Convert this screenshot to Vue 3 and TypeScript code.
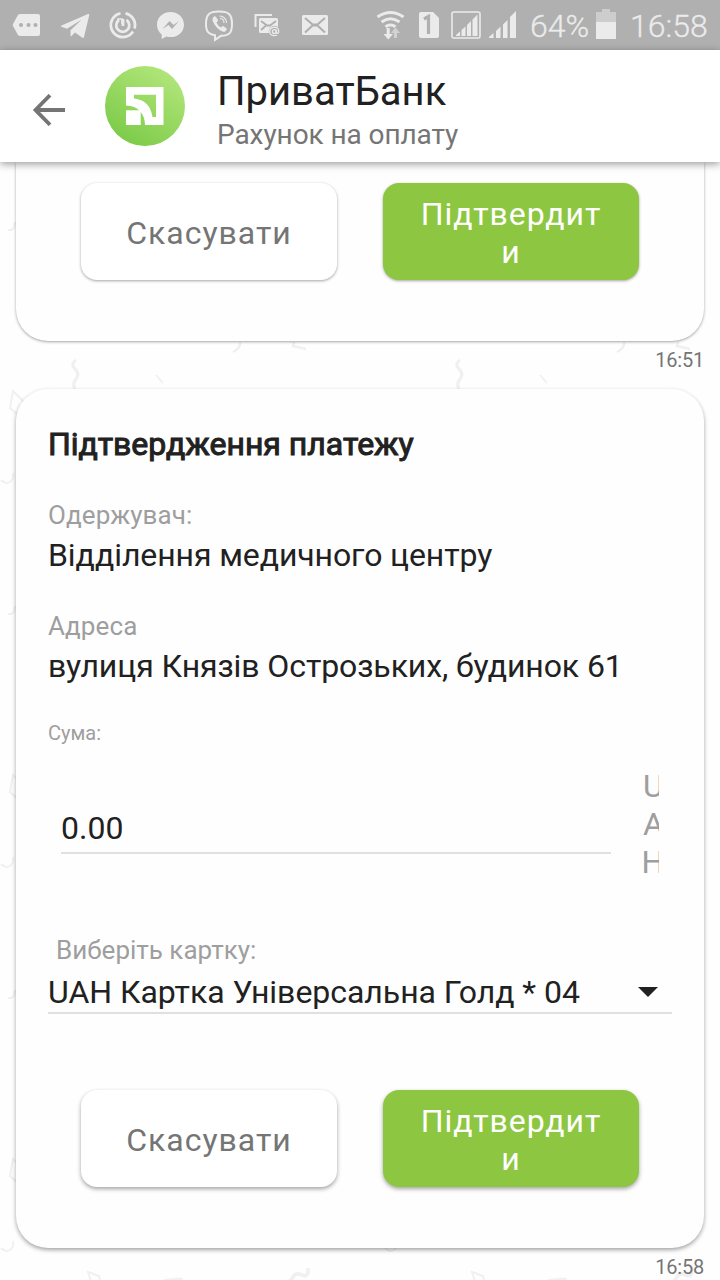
<script setup lang="ts">
interface Detail {
  label: string
  value: string
}

const contact = { name: 'ПриватБанк', subtitle: 'Рахунок на оплату' }
const actions = { cancel: 'Скасувати', confirm: 'Підтвердити' }
const details: Detail[] = [
  { label: 'Одержувач:', value: 'Відділення медичного центру' },
  { label: 'Адреса', value: 'вулиця Князів Острозьких, будинок 61' },
]
const currency = ['U', 'A', 'H']
</script>

<template>
  <div class="screen">
    <div class="status">
      <svg class="status-icons" width="340" height="50" viewBox="0 0 340 50">
        <g fill="#ebebeb">
          <path d="M20 14h18q2 0 2 2v18q0 2-2 2H20q-1 0-2-1l-5-9q-.5-1 0-2l5-9q1-1 2-1z" />
          <path d="M61.500 25.500 88 14q1.500-.4 1.200 1.200L84 37q-.6 1.700-2 .6l-7-5-3.700 3.700-.8-.6v-5.500l11-10.500-14.500 9-5.600-1.900q-1.200-.6.100-1.300z" />
          <path d="M170.500 12c-8 0-13.500 5.600-13.500 12.700 0 4 1.700 7.400 4.700 9.700V39l4.600-2.500c1.300.4 2.700.6 4.200.6 8 0 13.500-5.500 13.500-12.400S178.500 12 170.500 12z" />
          <path d="M254.500 14H272v2h-15.500v11h-2z" />
          <rect x="259" y="18" width="19" height="15" rx="1.500" />
          <rect x="302" y="15" width="26" height="20" rx="1.500" />
        </g>
        <g fill="#b0b0b0">
          <circle cx="21" cy="25" r="2" /><circle cx="28.500" cy="25" r="2" /><circle cx="35.500" cy="25" r="2" />
          <path d="m162.500 29 7-8 4 4 5.500-4-7 8-3.500-4z" />
          <circle cx="274.500" cy="31.500" r="5.800" />
        </g>
        <g fill="none" stroke="#ebebeb">
          <path d="M120.500 13.300a12 12 0 1 0 12.500 18.200M125.500 13.300a12 12 0 0 1 9 15.200" stroke-width="2.800" />
          <path d="M119 20a6.500 6.500 0 1 0 7.500 0M123 19v7" stroke-width="2.800" />
          <path d="M117 19h5v5" stroke-width="1.600" />
          <path d="M219 11.500c10 0 13 3 13 12.500s-3 11.500-11 11.800l-6 4v-4.600c-7-1-9-4-9-11.200 0-9.500 3-12.500 13-12.500z" stroke-width="2" />
          <path d="M219.500 16c4 0 7 3 7 7M220 18.500c2.500 0 4 1.800 4 4.500" stroke-width="1.100" />
        </g>
        <path d="M214 16.500q1-.8 2 .5l2 3q.4 1-1.600 2.500 1.600 3.500 4.600 5 1.500-1.800 2.500-1.300l3 2q1 1-1 3-1.200 1-3 .3-7-3-10-11-.4-2.500 1.500-4z" fill="#ebebeb" />
        <g fill="none" stroke="#b0b0b0" stroke-width="1.800">
          <path d="m261 21 6 4.500h3l6-4.500M261 30l5-4.500" />
          <path d="m305 18 7.500 6.500h5L325 18M305 32.500l7.500-7h5l7.500 7" stroke-width="2.200" />
        </g>
        <g fill="none" stroke="#ebebeb" stroke-width="1.300">
          <circle cx="274.300" cy="31.500" r="1.900" />
          <path d="M276.200 29.500v3q.3 1.200 1.500.8 1.300-.7 1-2.700-.7-3.400-4.500-3.400-4.500.4-4.500 4.600.4 3.900 4.600 3.900 1.500 0 2.600-.7" />
        </g>
      </svg>
      <div class="status-right">
        <svg width="150" height="50" viewBox="370 0 150 50">
          <g fill="none" stroke="#ebebeb" stroke-width="3">
            <path d="M377.500 17q13-9 26 0M381.500 22q9-6.500 18 0M385.500 26.700q5-3.500 10 0" />
          </g>
          <path d="M386.700 28h3v6h3.300l-4.800 5.500-4.700-5.500h3.200z" fill="#ebebeb" />
          <path d="M394 38v-5h-3l4.500-5.500L400 33h-3v5z" fill="#d2d2d2" />
          <path d="M421 12h12l6 6v18q0 2-2 2h-16q-2 0-2-2V14q0-2 2-2z" fill="#ebebeb" />
          <path d="m424 19 4.500-2.500v17.500" fill="none" stroke="#b0b0b0" stroke-width="3.200" />
          <rect x="452" y="12" width="28" height="26" rx="2" fill="none" stroke="#ebebeb" stroke-width="1.600" />
          <path d="M456 36v-1l4-3.500V36zm5.500 0v-6l4-3.500V36zm5.500 0V25l4-4v15zm5.500 0V19.500l5-5V36z" fill="#ebebeb" />
          <path d="M489 38v-1l4.500-4v5zm7 0v-7l4.500-4.500V38zm7 0V24.500l4.500-4.500v18zm7 0V17l6-6v27z" fill="#ebebeb" />
        </svg>
        <span class="battery-text">64%</span>
        <svg class="battery" width="20" height="50" viewBox="0 0 20 50">
          <path d="M0 12h6V9h8v3h6v10H0z" fill="#cdcdcd" /><path d="M0 22h20v17H0z" fill="#ebebeb" />
        </svg>
        <span class="clock">16:58</span>
      </div>
    </div>

    <header class="header">
      <svg class="back" width="34" height="32" viewBox="0 0 34 32">
        <path d="M33 16H4M18 1.200 3.500 16 18 30.800" fill="none" stroke="#757575" stroke-width="3.800" />
      </svg>
      <svg class="avatar" width="80" height="80" viewBox="0 0 80 80">
        <defs>
          <linearGradient id="avatarFill" x1=".8" y1=".1" x2=".25" y2=".95">
            <stop offset="0" stop-color="#b0e579" /><stop offset="1" stop-color="#7dcb49" />
          </linearGradient>
        </defs>
        <circle cx="40" cy="40" r="40" fill="url(#avatarFill)" />
        <path d="M21 21h37.500v38H40c0-11-7-19.500-19-19.500zM29 28.700v3.800C41 33.500 46 41 47.500 51h3.500V28.700z" fill="#fff" fill-rule="evenodd" />
        <path d="M21 44.300h14.700V59H21z" fill="#fff" />
      </svg>
      <div class="contact">
        <div class="name">{{ contact.name }}</div>
        <div class="subtitle">{{ contact.subtitle }}</div>
      </div>
    </header>

    <main class="chat">
      <svg class="confetti" width="720" height="1118" viewBox="0 162 720 1118">
        <defs>
          <pattern id="confettiTile" width="384" height="384" y="342" patternUnits="userSpaceOnUse">
            <g fill="none" stroke="#f0f0f0" stroke-width="2.500">
              <path d="M240 0q1 6-7 10M294 0l-1 4 13 3" />
              <path d="M76 18q-6 4-1 9t1 10-1 10" stroke-width="3.200" />
              <path d="m156 33 7 8" stroke-width="1.800" />
              <path d="m13 49 13 13-8 11-8-7z" stroke-width="2" />
              <path d="M1 138q6 6 11 0 2-3 1-7" stroke-width="1.800" />
              <path d="M8 272q7 1 7-8" stroke-width="2" />
              <path d="m88 162 11 4 3 12-9 0z" stroke-width="2" />
              <path d="M285 172q6 0 8-5t9-2 6-7" stroke-width="3.600" />
            </g>
            <path d="m164 169 18-1.500 6 14-22 2z" fill="#f0f0f0" />
          </pattern>
        </defs>
        <rect y="162" width="720" height="1118" fill="url(#confettiTile)" />
      </svg>

      <section class="card previous">
        <div class="actions">
          <button class="btn cancel">{{ actions.cancel }}</button>
          <button class="btn confirm">{{ actions.confirm }}</button>
        </div>
      </section>
      <time class="stamp">16:51</time>

      <section class="card current">
        <h1 class="title">Підтвердження платежу</h1>
        <div v-for="d in details" :key="d.label" class="detail">
          <div class="label">{{ d.label }}</div>
          <div class="value">{{ d.value }}</div>
        </div>
        <div class="sum-label">Сума:</div>
        <div class="sum">
          <div class="amount">0.00</div>
          <div class="currency"><span v-for="c in currency" :key="c">{{ c }}</span></div>
        </div>
        <div class="card-label">Виберіть картку:</div>
        <div class="select">
          <span class="picked">UAH Картка Універсальна Голд * 04</span>
          <svg width="20" height="10" viewBox="0 0 20 10"><path d="M0 0h20L10 10z" fill="#212121" /></svg>
        </div>
        <div class="actions">
          <button class="btn cancel">{{ actions.cancel }}</button>
          <button class="btn confirm">{{ actions.confirm }}</button>
        </div>
      </section>
      <time class="stamp last">16:58</time>
    </main>
  </div>
</template>

<style>
body {
  margin: 0;
  overflow: hidden;
}
</style>

<style scoped>
.screen {
  width: 720px;
  height: 1280px;
  overflow: hidden;
  display: flex;
  flex-direction: column;
  background: #fefefe;
  color: #212121;
  font-family: Roboto, 'Noto Sans', sans-serif;
}
.screen * {
  box-sizing: border-box;
}
svg {
  display: block;
  flex: none;
}
.status {
  height: 50px;
  flex: none;
  display: flex;
  justify-content: space-between;
  background: #b0b0b0;
  color: #ebebeb;
}
.status-right {
  width: 350px;
  display: flex;
  line-height: 52px;
  font-size: 32px;
  font-weight: 300;
  white-space: nowrap;
  -webkit-text-stroke: 0.3px #ebebeb;
}
.battery-text {
  width: 66px;
  padding-left: 10px;
  flex: none;
}
.battery {
  margin-left: 10px;
}
.clock {
  margin-left: 14px;
}
.header {
  position: relative;
  z-index: 1;
  height: 112px;
  flex: none;
  display: flex;
  background: #fff;
  box-shadow: 0 2px 8px rgba(0, 0, 0, 0.4);
}
.back {
  margin: 44px 0 0 32px;
}
.avatar {
  margin: 16px 0 0 39px;
}
.contact {
  margin: 18px 0 0 32px;
  white-space: nowrap;
}
.name {
  font-size: 40px;
  line-height: 48px;
}
.subtitle {
  font-size: 28px;
  line-height: 38px;
  letter-spacing: -0.08px;
  color: #757575;
}
.chat {
  position: relative;
  flex: 1;
  display: flex;
  flex-direction: column;
  padding: 0 16px;
}
.confetti {
  position: absolute;
  left: 0;
  top: 0;
}
.card {
  position: relative;
  flex: none;
  background: #fefefe;
  box-shadow: 0 1px 3px rgba(0, 0, 0, 0.36);
}
.previous {
  height: 179px;
  padding: 21px 65px 0;
  border-radius: 0 0 32px 32px;
}
.current {
  height: 859px;
  padding: 32px 32px 0;
  border-radius: 32px;
  box-shadow: 0 2px 4px rgba(0, 0, 0, 0.36);
}
.stamp {
  position: relative;
  height: 48px;
  flex: none;
  text-align: right;
  font-size: 20px;
  line-height: 38px;
  letter-spacing: -0.2px;
  color: #757575;
}
.title {
  margin: 0 0 28px;
  font-size: 32px;
  line-height: 46px;
  font-weight: 400;
  -webkit-text-stroke: 1px #212121;
  white-space: nowrap;
}
.detail {
  height: 111px;
  white-space: nowrap;
}
.label {
  font-size: 26px;
  line-height: 40px;
  letter-spacing: 0.1px;
  color: #9e9e9e;
}
.value {
  font-size: 32px;
  line-height: 40px;
  letter-spacing: -0.1px;
}
.sum-label {
  margin-top: 4px;
  font-size: 20px;
  line-height: 24px;
  color: #9e9e9e;
}
.sum {
  display: flex;
  height: 190px;
  padding-left: 13px;
}
.amount {
  width: 550px;
  height: 109px;
  padding-top: 65px;
  font-size: 32px;
  line-height: 36px;
  border-bottom: 2px solid #e0e0e0;
}
.currency {
  width: 17px;
  margin: 22px 0 0 31px;
  padding-left: 1px;
  overflow: hidden;
  color: #9e9e9e;
  font-size: 32px;
  line-height: 38px;
}
.currency span {
  display: block;
}
.currency span:last-child {
  margin-left: -1.5px;
}
.card-label {
  margin-left: 8px;
  padding-bottom: 7px;
  font-size: 26px;
  line-height: 30px;
  color: #9e9e9e;
}
.select {
  display: flex;
  justify-content: space-between;
  align-items: center;
  width: 624px;
  border-bottom: 2px solid #e0e0e0;
  padding-right: 14px;
}
.picked {
  font-size: 32px;
  line-height: 40px;
  letter-spacing: -0.03px;
  white-space: nowrap;
}
.actions {
  display: flex;
  gap: 46px;
}
.current .actions {
  padding: 76px 33px 0;
}
.btn {
  width: 256px;
  height: 97px;
  flex: none;
  border: 0;
  border-radius: 16px;
  padding: 2px 32px 0;
  font-family: inherit;
  font-size: 32px;
  line-height: 38px;
  letter-spacing: 0.96px;
  overflow-wrap: anywhere;
  box-shadow: 0 1px 3px rgba(0, 0, 0, 0.36);
}
.current .btn {
  box-shadow: 0 2px 4px rgba(0, 0, 0, 0.36);
}
.cancel {
  background: #fff;
  color: #757575;
}
.confirm {
  padding-left: 36px;
  padding-right: 36px;
  background: #8dc741;
  color: #fff;
}
</style>
